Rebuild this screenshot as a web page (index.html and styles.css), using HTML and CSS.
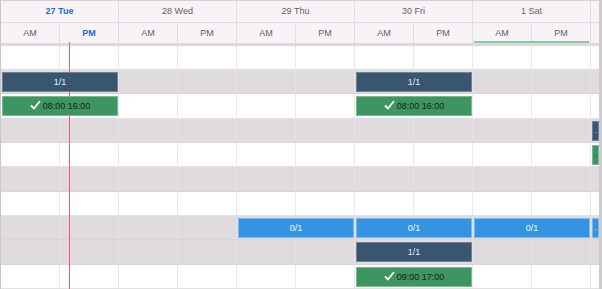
FILE: index.html
```html
<!DOCTYPE html>
<html lang="en">
<head>
  <meta charset="UTF-8" />
  <title>Timeline</title>
  <link rel="stylesheet" href="styles.css">
</head>
<body>
  <div class="scheduler">
    <div class="head-days">
      <div class="day today">27 Tue</div>
      <div class="day">28 Wed</div>
      <div class="day">29 Thu</div>
      <div class="day">30 Fri</div>
      <div class="day">1 Sat</div>
      <div class="day stub"></div>
    </div>
    <div class="head-halves">
      <div class="half">AM</div>
      <div class="half today">PM</div>
      <div class="half">AM</div>
      <div class="half">PM</div>
      <div class="half">AM</div>
      <div class="half">PM</div>
      <div class="half">AM</div>
      <div class="half">PM</div>
      <div class="half marked">AM</div>
      <div class="half">PM</div>
      <div class="half stub"></div>
    </div>

    <div class="rows">
      <div class="row"></div>
      <div class="row grey">
        <div class="bar dark c1">1/1</div>
        <div class="bar dark c7">1/1</div>
      </div>
      <div class="row tall">
        <div class="bar green c1"><svg width="11" height="10" viewBox="0 0 11 10"><path d="M1 5.5 L4 8.5 L10 1" /></svg>08:00 16:00</div>
        <div class="bar green c7"><svg width="11" height="10" viewBox="0 0 11 10"><path d="M1 5.5 L4 8.5 L10 1" /></svg>08:00 16:00</div>
      </div>
      <div class="row grey">
        <div class="bar dark c11">.</div>
      </div>
      <div class="row">
        <div class="bar green c11">.</div>
      </div>
      <div class="row grey tall"></div>
      <div class="row"></div>
      <div class="row grey">
        <div class="bar blue c5">0/1</div>
        <div class="bar blue c7">0/1</div>
        <div class="bar blue c9">0/1</div>
        <div class="bar blue c11">.</div>
      </div>
      <div class="row grey tall">
        <div class="bar dark c7">1/1</div>
      </div>
      <div class="row">
        <div class="bar green c7"><svg width="11" height="10" viewBox="0 0 11 10"><path d="M1 5.5 L4 8.5 L10 1" /></svg>09:00 17:00</div>
      </div>
    </div>

    <div class="now-line"></div>
  </div>
</body>
</html>
```

FILE: styles.css
```css
html, body {
  margin: 0;
  overflow: hidden;
}
body {
  font-family: "Liberation Sans", Arial, sans-serif;
  font-size: 9px;
  color: #5f5f5f;
  background: #fff;
}
.scheduler {
  position: relative;
  width: 598px;
  height: 288px;
  border-top: 1px solid #d4d0d4;
  border-left: 1px solid #c9c6c9;
  border-right: 3px solid #cfcccf;
  overflow: hidden;
}

/* header */
.head-days,
.head-halves {
  display: grid;
  grid-template-columns: repeat(5, 118px) 8px;
  background: #f7f3f7;
}
.head-halves {
  grid-template-columns: repeat(10, 59px) 8px;
  border-bottom: 3px solid #dcd8dc;
}
.day {
  height: 21px;
  line-height: 21px;
  text-align: center;
  border-right: 1px solid #e2dde2;
  border-bottom: 1px solid #e2dde2;
}
.half {
  position: relative;
  height: 20px;
  line-height: 20px;
  text-align: center;
  border-right: 1px solid #e2dde2;
}
.stub {
  border-right: none;
}
.today {
  color: #1b6bd6;
  font-weight: bold;
}
.marked::after {
  content: "";
  position: absolute;
  left: 1px;
  bottom: 0;
  width: 115px;
  height: 2px;
  background: #8ec8a3;
}

/* body rows */
.row {
  box-sizing: border-box;
  display: grid;
  grid-template-columns: repeat(10, 59px) 8px;
  align-items: start;
  height: 24px;
  border-bottom: 1px solid #e4e1e4;
  background-color: #fff;
  background-image: repeating-linear-gradient(to right, transparent 0 58px, #ebe8eb 58px 59px);
}
.row.tall {
  height: 25px;
}
.row.grey {
  background-color: #e0dbde;
  border-bottom-color: #d9d5d8;
  background-image: repeating-linear-gradient(to right, transparent 0 58px, #e6e2e5 58px 59px);
}

.bar {
  position: relative;
  z-index: 2;
  box-sizing: border-box;
  height: 20px;
  margin: 2px 1px 0;
  line-height: 18px;
  text-align: center;
  white-space: nowrap;
  overflow: hidden;
  grid-column: span 2;
}
.bar.c1 { grid-column: 1 / span 2; }
.bar.c5 { grid-column: 5 / span 2; }
.bar.c7 { grid-column: 7 / span 2; }
.bar.c9 { grid-column: 9 / span 2; }
.bar.c11 {
  grid-column: 11;
  margin-right: 0;
  font-size: 8px;
}
.dark {
  background: #3a5570;
  border: 1px solid #6f8296;
  color: #e6ebf0;
}
.green {
  background: #3d9660;
  border: 1px solid #78b993;
  color: #16231b;
}
.blue {
  background: #3594e2;
  border: 1px solid #7db8ec;
  color: #f4f8fc;
}
.green svg {
  vertical-align: -1px;
  margin-right: 2px;
}
.green path {
  fill: none;
  stroke: #fff;
  stroke-width: 1.8;
}

.now-line {
  position: absolute;
  z-index: 1;
  top: 41px;
  bottom: 0;
  left: 68px;
  border-left: 1px solid #ee5b6a;
}
```
